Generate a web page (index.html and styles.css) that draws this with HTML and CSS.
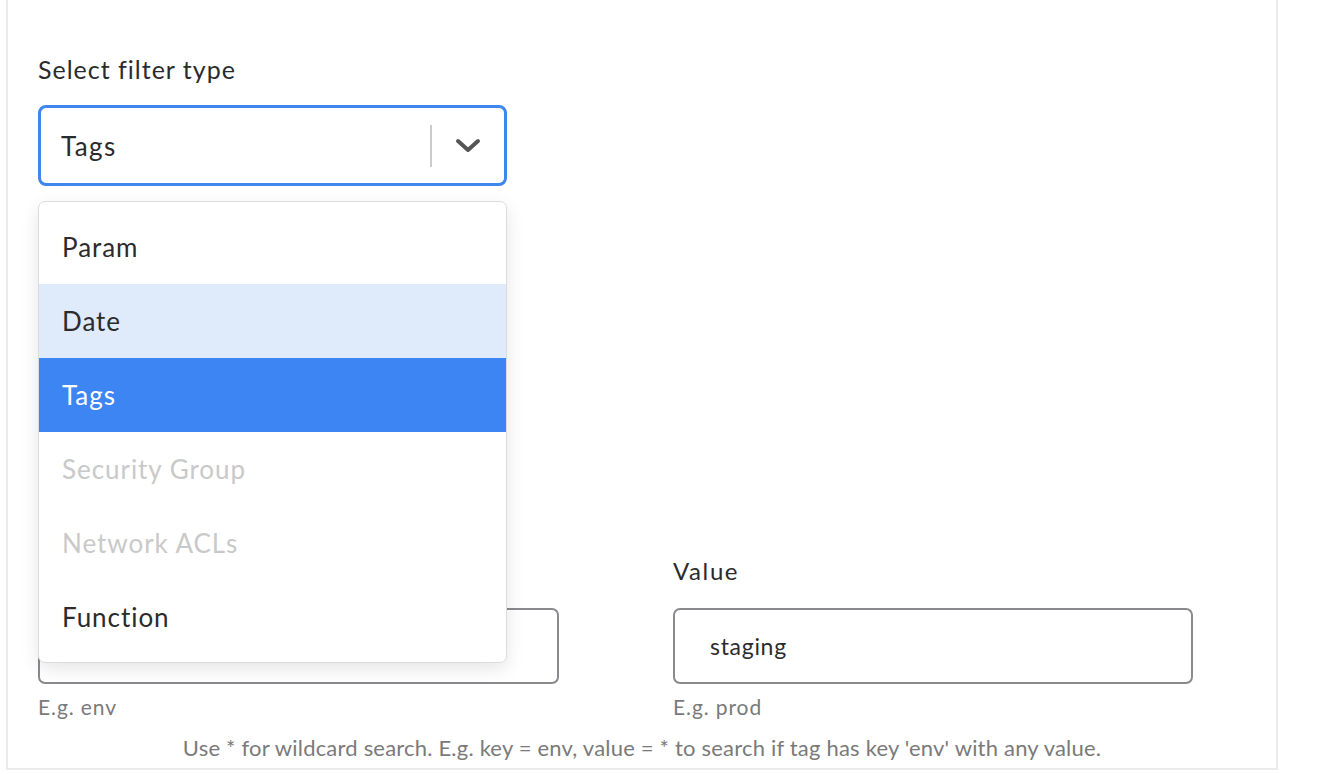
FILE: index.html
```html
<!DOCTYPE html>
<html>
<head>
<meta charset="utf-8">
<link rel="stylesheet" href="styles.css">
</head>
<body>
<div class="panel">
  <div class="type-field">
    <div class="type-label">Select filter type</div>
    <div class="select-wrap">
      <div class="select">
        <span class="select-value">Tags</span>
        <span class="select-sep"></span>
        <span class="select-arrow">
          <svg width="26" height="16" viewBox="0 0 26 16"><polyline points="3,3 13,12 23,3" fill="none" stroke="#555" stroke-width="4" stroke-linecap="round" stroke-linejoin="round"/></svg>
        </span>
      </div>
      <ul class="menu">
        <li class="opt">Param</li>
        <li class="opt opt-hover">Date</li>
        <li class="opt opt-selected">Tags</li>
        <li class="opt opt-disabled">Security Group</li>
        <li class="opt opt-disabled">Network ACLs</li>
        <li class="opt">Function</li>
      </ul>
    </div>
  </div>
  <div class="tag-row">
    <div class="tag-col">
      <div class="tag-label">Key</div>
      <div class="tag-input">env</div>
      <div class="tag-hint">E.g. env</div>
    </div>
    <div class="tag-col">
      <div class="tag-label">Value</div>
      <div class="tag-input">staging</div>
      <div class="tag-hint">E.g. prod</div>
    </div>
  </div>
  <div class="footer-hint">Use * for wildcard search. E.g. key = env, value = * to search if tag has key 'env' with any value.</div>
</div>
</body>
</html>
```

FILE: styles.css
```css
html, body {
  margin: 0;
  padding: 0;
  background: #ffffff;
}
body {
  font-family: "Lato", "Open Sans", sans-serif;
  color: #2b2b2b;
}
.panel {
  box-sizing: border-box;
  width: 1272px;
  margin-left: 6px;
  border: solid #ebebeb;
  border-width: 0 2px 2px 2px;
  padding: 55px 0 9px 30px;
}
.type-label {
  font-size: 25px;
  line-height: 28px;
  letter-spacing: 1px;
  color: #2b2b2b;
}
.select-wrap {
  position: relative;
  width: 469px;
  margin-top: 22px;
}
.select {
  box-sizing: border-box;
  height: 81px;
  border: 3px solid #3f86ef;
  border-radius: 8px;
  display: flex;
  align-items: center;
  padding-left: 20px;
  background: #fff;
}
.select-value {
  flex: 1;
  font-size: 26px;
  letter-spacing: 1.4px;
  color: #2b2b2b;
}
.select-sep {
  width: 2px;
  height: 42px;
  background: #cccccc;
}
.select-arrow {
  width: 72px;
  display: flex;
  justify-content: center;
  align-items: center;
}
.menu {
  position: absolute;
  top: calc(100% + 15px);
  left: 0;
  right: 0;
  margin: 0;
  padding: 8px 0;
  list-style: none;
  background: #fff;
  border: 1px solid #dcdcdc;
  border-radius: 7px;
  box-shadow: 0 6px 18px rgba(0, 0, 0, 0.10);
  z-index: 2;
}
.opt {
  height: 74px;
  display: flex;
  align-items: center;
  padding-left: 23px;
  font-size: 26px;
  letter-spacing: 0.95px;
  color: #2b2b2b;
}
.opt-hover {
  background: #dfeafb;
}
.opt-selected {
  background: #3e85f4;
  color: #ffffff;
}
.opt-disabled {
  color: #c9c9c9;
}
.tag-row {
  display: flex;
  gap: 114px;
  margin-top: 371px;
}
.tag-col {
  width: 520px;
}
.tag-col:first-child {
  width: 521px;
}
.tag-label {
  font-size: 24px;
  line-height: 28px;
  letter-spacing: 1.6px;
  color: #2b2b2b;
}
.tag-input {
  box-sizing: border-box;
  height: 76px;
  margin-top: 23px;
  border: 2px solid #8a8a8e;
  border-radius: 7px;
  display: flex;
  align-items: center;
  padding-left: 35px;
  font-size: 23px;
  letter-spacing: 0.7px;
  color: #2b2b2b;
}
.tag-hint {
  margin-top: 12px;
  font-size: 21px;
  line-height: 22px;
  letter-spacing: 0.9px;
  color: #7a7a7a;
}
.footer-hint {
  margin-top: 19px;
  margin-left: -30px;
  text-align: center;
  font-size: 22px;
  line-height: 22px;
  letter-spacing: 0.2px;
  color: #7a7a7a;
}
```
